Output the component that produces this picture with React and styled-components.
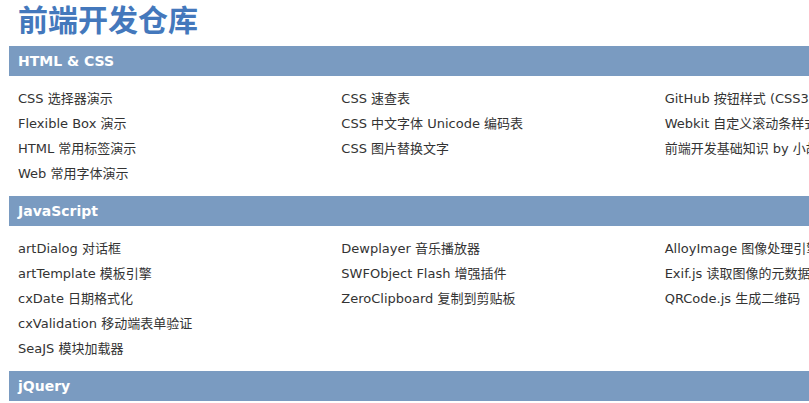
import styled, { createGlobalStyle } from "styled-components";

const GlobalStyle = createGlobalStyle`
    html, body {
        margin: 0;
        padding: 0;
        background: #fff;
        overflow: hidden;
    }
    body {
        font-family: "DejaVu Sans", "Noto Sans CJK SC", sans-serif;
        color: #333;
    }
`;

const Page = styled.div`
    width: 988px;
    padding: 0 9px;
`;

const Title = styled.h1`
    margin: 0 0 10px;
    padding-left: 9px;
    height: 36px;
    line-height: 36px;
    font-size: 30px;
    font-weight: bold;
    color: #4478bc;
    font-family: "Noto Sans CJK SC", sans-serif;
`;

const Section = styled.section`
    margin-bottom: 10px;
`;

const Header = styled.h2`
    margin: 0;
    padding-left: 9px;
    height: 30px;
    line-height: 30px;
    font-size: 14px;
    font-weight: bold;
    color: #fff;
    background: #7a9bc1;
`;

const List = styled.div`
    display: grid;
    grid-template-columns: repeat(3, 1fr);
    padding: 10px 9px 0;
`;

const Column = styled.ul`
    margin: 0;
    padding: 0;
    list-style: none;
`;

const Item = styled.li`
    height: 25px;
    line-height: 25px;
    font-size: 13px;
    white-space: nowrap;
    color: #333;
`;

const sections = [
    {
        title: "HTML & CSS",
        columns: [
            ["CSS 选择器演示", "Flexible Box 演示", "HTML 常用标签演示", "Web 常用字体演示"],
            ["CSS 速查表", "CSS 中文字体 Unicode 编码表", "CSS 图片替换文字"],
            ["GitHub 按钮样式 (CSS3)", "Webkit 自定义滚动条样式", "前端开发基础知识 by 小胡子哥"],
        ],
    },
    {
        title: "JavaScript",
        columns: [
            ["artDialog 对话框", "artTemplate 模板引擎", "cxDate 日期格式化", "cxValidation 移动端表单验证", "SeaJS 模块加载器"],
            ["Dewplayer 音乐播放器", "SWFObject Flash 增强插件", "ZeroClipboard 复制到剪贴板"],
            ["AlloyImage 图像处理引擎", "Exif.js 读取图像的元数据", "QRCode.js 生成二维码"],
        ],
    },
    {
        title: "jQuery",
        columns: [[], [], []],
    },
];

const App = () => {
    return (
        <Page>
            <GlobalStyle />
            <Title>前端开发仓库</Title>
            {sections.map((s) => (
                <Section key={s.title}>
                    <Header>{s.title}</Header>
                    <List>
                        {s.columns.map((col, i) => (
                            <Column key={i}>
                                {col.map((t) => (
                                    <Item key={t}>{t}</Item>
                                ))}
                            </Column>
                        ))}
                    </List>
                </Section>
            ))}
        </Page>
    );
};

export default App;
